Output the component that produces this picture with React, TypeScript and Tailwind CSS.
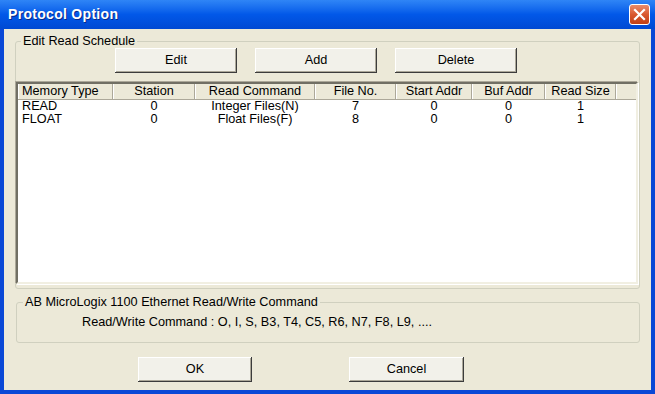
import React from 'react'

type Col = { label: string; w: number; left?: boolean }

const cols: Col[] = [
  { label: 'Memory Type', w: 95, left: true },
  { label: 'Station', w: 82 },
  { label: 'Read Command', w: 120 },
  { label: 'File No.', w: 81 },
  { label: 'Start Addr', w: 76 },
  { label: 'Buf Addr', w: 73 },
  { label: 'Read Size', w: 71 },
]

const rows = [
  ['READ', '0', 'Integer Files(N)', '7', '0', '0', '1'],
  ['FLOAT', '0', 'Float Files(F)', '8', '0', '0', '1'],
]

const XpButton = ({ label, w }: { label: string; w: string }) => (
  <button
    className={`${w} h-[25px] bg-[#f2f1ea] text-black shadow-[inset_-1px_-1px_#3c3c3c,inset_1px_1px_#ffffff,inset_-2px_-2px_#aca899]`}
  >
    {label}
  </button>
)

const CloseButton = () => (
  <div className="w-[21px] h-[21px] rounded-[3px] border border-white bg-gradient-to-b from-[#e98b6a] via-[#d9582f] to-[#c13f14] flex items-center justify-center">
    <svg width="13" height="13" viewBox="0 0 13 13">
      <path d="M2 2 L11 11 M11 2 L2 11" stroke="#fff" strokeWidth="2.2" strokeLinecap="square" />
    </svg>
  </div>
)

export default function App() {
  return (
    <div className="w-[655px] h-[394px] flex flex-col bg-[#0a48d6] font-['Liberation_Sans',Arial,sans-serif] text-[12.7px] text-black overflow-hidden">
      {/* title bar */}
      <div className="h-[29px] flex items-center justify-between pl-[8px] pr-[5px] bg-gradient-to-b from-[#2f85f6] via-[#0258e8] to-[#0049d3]">
        <span className="text-white font-bold text-[14px] tracking-[0.3px] [text-shadow:1px_1px_#0a2a8a]">Protocol Option</span>
        <CloseButton />
      </div>

      {/* body */}
      <div className="flex-1 mx-[4px] mb-[4px] bg-[#ece9d8] flex flex-col pt-[5px]">
        <fieldset className="ml-[11px] w-[625px] border border-[#d0d0bf] rounded-[3px] h-[255px]">
          <legend className="ml-[5px] px-[2px] leading-[14px]">Edit Read Schedule</legend>
          <div className="flex gap-[18px] pl-[99px]">
            <XpButton label="Edit" w="w-[122px]" />
            <XpButton label="Add" w="w-[122px]" />
            <XpButton label="Delete" w="w-[122px]" />
          </div>
          <div className="mt-[9px] w-[622px] h-[202px] bg-white border-2 border-t-[#716f64] border-l-[#716f64] border-b-[#f1efe2] border-r-[#f1efe2] shadow-[-1px_-1px_#aca899,1px_1px_#ffffff] flex flex-col">
            <div className="flex h-[16px] bg-[#ece9d8] border-b border-[#aca899]">
              {cols.map((c) => (
                <div
                  key={c.label}
                  style={{ width: c.w }}
                  className={`h-full flex items-center shadow-[inset_-1px_0_#aca899,inset_1px_0_#ffffff] ${c.left ? 'pl-[4px]' : 'justify-center'}`}
                >
                  {c.label}
                </div>
              ))}
              <div className="flex-1 h-full shadow-[inset_1px_0_#ffffff]" />
            </div>
            {rows.map((r) => (
              <div key={r[0]} className="flex h-[13px] leading-[13px]">
                {r.map((v, i) => (
                  <div
                    key={i}
                    style={{ width: cols[i].w }}
                    className={cols[i].left ? 'pl-[4px]' : 'text-center'}
                  >
                    {v}
                  </div>
                ))}
              </div>
            ))}
          </div>
        </fieldset>

        <fieldset className="mt-[6px] ml-[12px] w-[624px] h-[48px] border border-[#d0d0bf] rounded-[3px]">
          <legend className="ml-[6px] px-[2px] leading-[14px]">AB MicroLogix 1100 Ethernet Read/Write Command</legend>
          <div className="pl-[65px] pt-[4px]">Read/Write Command : O, I, S, B3, T4, C5, R6, N7, F8, L9, ....</div>
        </fieldset>

        <div className="flex pl-[134px] gap-[97px] mt-[14px]">
          <XpButton label="OK" w="w-[114px]" />
          <XpButton label="Cancel" w="w-[115px]" />
        </div>
      </div>
    </div>
  )
}
